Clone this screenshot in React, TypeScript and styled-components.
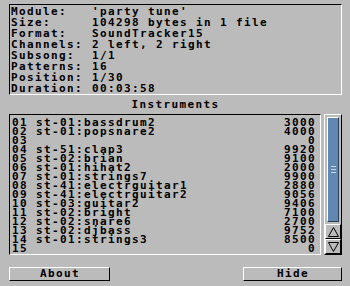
import React from 'react';
import styled, { createGlobalStyle } from 'styled-components';

const GlobalStyle = createGlobalStyle`
  html, body {
    margin: 0;
    padding: 0;
    background: #bbbbbb;
  }
  body {
    font-family: "DejaVu Sans Mono", "Liberation Mono", monospace;
    font-weight: bold;
    font-size: 11px;
    letter-spacing: 1.38px;
    color: #000;
  }
`;

const info = [
  ['Module:', "'party tune'"],
  ['Size:', '104298 bytes in 1 file'],
  ['Format:', 'SoundTracker15'],
  ['Channels:', '2 left, 2 right'],
  ['Subsong:', '1/1'],
  ['Patterns:', '16'],
  ['Position:', '1/30'],
  ['Duration:', '00:03:58'],
];

const instruments: [string, string, number][] = [
  ['01', 'st-01:bassdrum2', 3000],
  ['02', 'st-01:popsnare2', 4000],
  ['03', '', 0],
  ['04', 'st-51:clap3', 9920],
  ['05', 'st-02:brian', 9100],
  ['06', 'st-01:hihat2', 2000],
  ['07', 'st-01:strings7', 9900],
  ['08', 'st-41:electrguitar1', 2880],
  ['09', 'st-41:electrguitar2', 9056],
  ['10', 'st-03:guitar2', 9406],
  ['11', 'st-02:bright', 7100],
  ['12', 'st-02:snare6', 2700],
  ['13', 'st-02:djbass', 9752],
  ['14', 'st-01:strings3', 8500],
  ['15', '', 0],
];

const Window = styled.div`
  width: 350px;
  height: 286px;
  box-sizing: border-box;
  padding: 4px 8px 0 9px;
  display: flex;
  flex-direction: column;
`;

const Sunken = styled.div`
  box-sizing: border-box;
  border-top: 1px solid #000;
  border-left: 1px solid #000;
  border-bottom: 1px solid #fff;
  border-right: 1px solid #fff;
`;

const InfoBox = styled(Sunken)`
  height: 91px;
  padding: 1px 0 0 1px;
  display: grid;
  grid-template-columns: 81px 1fr;
  grid-auto-rows: 11px;
  line-height: 11px;
  white-space: pre;
`;

const Heading = styled.div`
  height: 18px;
  line-height: 18px;
  text-align: center;
  padding-top: 1px;
`;

const ListArea = styled.div`
  display: flex;
  gap: 3px;
  height: 141px;
`;

const List = styled(Sunken)`
  flex: 1;
  padding: 3px 4px 0 2px;
  line-height: 9px;
`;

const Row = styled.div`
  display: flex;
  height: 9px;
  white-space: pre;
`;

const Name = styled.span`
  flex: 1;
`;

const Raised = styled.div`
  box-sizing: border-box;
  border-top: 1px solid #fff;
  border-left: 1px solid #fff;
  border-bottom: 1px solid #000;
  border-right: 1px solid #000;
`;

const ScrollBar = styled(Raised)`
  width: 18px;
  display: flex;
  flex-direction: column;
`;

const Track = styled.div`
  flex: 1;
  padding: 2px 2px 2px 2px;
  display: flex;
`;

const Thumb = styled(Raised)`
  flex: 1;
  background: #6088b0;
  border-bottom-color: #2c3f55;
  border-right-color: #2c3f55;
  display: flex;
  align-items: center;
  justify-content: center;
`;

const ArrowButton = styled(Raised)`
  height: 15px;
  display: flex;
  align-items: center;
  justify-content: center;
`;

const Footer = styled.div`
  display: flex;
  justify-content: space-between;
  margin-top: 12px;
`;

const Button = styled(Raised)<{ $w: number }>`
  width: ${p => p.$w}px;
  height: 14px;
  line-height: 12px;
  text-align: center;
  padding-left: 1px;
`;

const Grip = () => (
  <svg width="5" height="7" viewBox="0 0 5 7">
    <rect x="0" y="0" width="5" height="1" fill="#c8d8ea" />
    <rect x="0" y="3" width="5" height="1" fill="#c8d8ea" />
    <rect x="0" y="6" width="5" height="1" fill="#c8d8ea" />
  </svg>
);

const Arrow = ({ up }: { up?: boolean }) => (
  <svg width="11" height="10" viewBox="0 0 11 10">
    <polygon
      points={up ? '5.5,0.5 10.5,9.5 0.5,9.5' : '0.5,0.5 10.5,0.5 5.5,9.5'}
      fill="none"
      stroke="#000"
      strokeWidth="1"
    />
  </svg>
);

export default function App() {
  return (
    <>
      <GlobalStyle />
      <Window>
        <InfoBox>
          {info.map(([k, v]) => (
            <React.Fragment key={k}>
              <span>{k}</span>
              <span>{v}</span>
            </React.Fragment>
          ))}
        </InfoBox>
        <Heading>Instruments</Heading>
        <ListArea>
          <List>
            {instruments.map(([n, name, len]) => (
              <Row key={n}>
                <Name>{n} {name}</Name>
                <span>{len}</span>
              </Row>
            ))}
          </List>
          <ScrollBar>
            <Track>
              <Thumb>
                <Grip />
              </Thumb>
            </Track>
            <ArrowButton>
              <Arrow up />
            </ArrowButton>
            <ArrowButton>
              <Arrow />
            </ArrowButton>
          </ScrollBar>
        </ListArea>
        <Footer>
          <Button $w={101}>About</Button>
          <Button $w={99}>Hide</Button>
        </Footer>
      </Window>
    </>
  );
}
